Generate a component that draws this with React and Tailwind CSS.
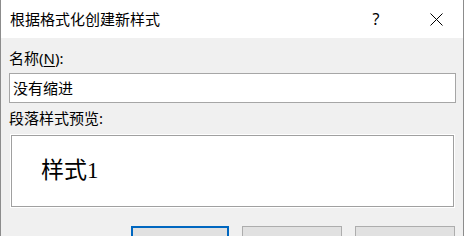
const font = "font-['Noto_Sans','Noto_Sans_CJK_SC',sans-serif]"

export default function App() {
  return (
    <div className={`w-[464px] h-[236px] overflow-hidden bg-[#f0f0f0] border-l border-r border-[#8c8c8c] text-black ${font}`}>
      {/* title bar */}
      <div className="h-[38px] bg-white flex items-center">
        <span className="pl-[9px] text-[15px] leading-[20px] flex-1">根据格式化创建新样式</span>
        <span className="w-[46px] text-center text-[16px] leading-[20px] mr-[14px]">?</span>
        <div className="w-[46px] flex justify-center mr-[4px]">
          <svg width="13" height="13" viewBox="0 0 13 13" fill="none" stroke="#000" strokeWidth="1">
            <path d="M0.5 0.5 L12.5 12.5 M12.5 0.5 L0.5 12.5" />
          </svg>
        </div>
      </div>

      {/* body */}
      <div className="px-[8px]">
        <div className="mt-[10px] text-[15px] leading-[20px]">
          名称(<span className="underline underline-offset-2">N</span>):
        </div>
        <div className="mt-[5px] h-[30px] w-[447px] bg-white border border-[#a6a6a6] flex items-center px-[3px] text-[15px]">
          没有缩进
        </div>
        <div className="mt-[5px] text-[15px] leading-[20px]">段落样式预览:</div>
        <div className="mt-[7px] ml-[2px] h-[72px] w-[443px] bg-white border border-[#a0a0a0] ring-1 ring-white flex items-center pl-[29px]">
          <span className="font-['Liberation_Serif','Noto_Sans_CJK_SC',serif] text-[23px] leading-[26px]">样式1</span>
        </div>
        <div className="mt-[19px] flex justify-end gap-[13px]">
          <div className="w-[98px] h-[30px] bg-[#e1e1e1] border-2 border-[#0067c0]" />
          <div className="w-[100px] h-[30px] bg-[#e1e1e1] border border-[#adadad]" />
          <div className="w-[100px] h-[30px] bg-[#e1e1e1] border border-[#adadad]" />
        </div>
      </div>
    </div>
  )
}
